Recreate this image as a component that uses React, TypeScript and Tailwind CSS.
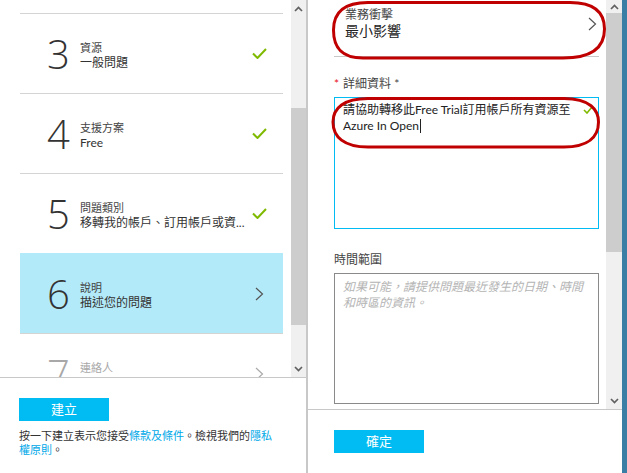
import React from 'react'

const sans = "font-['Lato','Noto_Sans_CJK_TC',sans-serif]"

type Step = {
  num: string
  title: string
  sub: string
  state: 'done' | 'active' | 'todo'
}

const steps: Step[] = [
  { num: '3', title: '資源', sub: '一般問題', state: 'done' },
  { num: '4', title: '支援方案', sub: 'Free', state: 'done' },
  { num: '5', title: '問題類別', sub: '移轉我的帳戶、訂用帳戶或資...', state: 'done' },
  { num: '6', title: '說明', sub: '描述您的問題', state: 'active' },
  { num: '7', title: '連絡人', sub: '', state: 'todo' },
]

function Check({ small }: { small?: boolean }) {
  if (small) {
    return (
      <svg width="10" height="8" viewBox="0 0 10 8">
        <path d="M1 4 L4 7 L9 1" fill="none" stroke="#7fba00" strokeWidth="1.6" />
      </svg>
    )
  }
  return (
    <svg width="15" height="11" viewBox="0 0 15 11">
      <path d="M1 5.5 L5.5 10 L14 1" fill="none" stroke="#7fba00" strokeWidth="2" />
    </svg>
  )
}

function Chevron({ color = '#555' }: { color?: string }) {
  return (
    <svg width="9" height="14" viewBox="0 0 9 14">
      <polyline points="1,1 7.5,7 1,13" fill="none" stroke={color} strokeWidth="1.2" />
    </svg>
  )
}

function ArrowUp() {
  return (
    <svg width="9" height="6" viewBox="0 0 9 6">
      <polyline points="1,5 4.5,1.5 8,5" fill="none" stroke="#606060" strokeWidth="1.7" />
    </svg>
  )
}

function ArrowDown() {
  return (
    <svg width="9" height="6" viewBox="0 0 9 6">
      <polyline points="1,1 4.5,4.5 8,1" fill="none" stroke="#606060" strokeWidth="1.7" />
    </svg>
  )
}

function StepRow({ step }: { step: Step }) {
  const active = step.state === 'active'
  const todo = step.state === 'todo'
  return (
    <div
      className={`flex h-[80px] items-center border-t pl-[27px] pr-[16px] ${
        active ? 'border-[#b3eaf9] bg-[#b3eaf9]' : 'border-[#d4d4d4]'
      }`}
    >
      <div
        className={`w-[33px] font-['Open_Sans',sans-serif] text-[40px] font-light leading-none ${
          todo ? 'text-[#a8a8a8]' : 'text-[#333]'
        }`}
      >
        {step.num}
      </div>
      <div className="flex-1 pt-[4px]">
        <div className={`text-[11px] leading-[15px] ${todo ? 'text-[#a8a8a8]' : 'text-[#444]'}`}>
          {step.title}
        </div>
        <div className={`text-[12px] leading-[16px] ${todo ? 'text-[#a8a8a8]' : 'text-[#333]'}`}>
          {step.sub || '\u00a0'}
        </div>
      </div>
      <div className="flex w-[15px] justify-center">
        {step.state === 'done' ? <Check /> : <Chevron color={todo ? '#aaa' : '#555'} />}
      </div>
    </div>
  )
}

export default function App() {
  return (
    <div className={`flex h-[473px] w-[627px] overflow-hidden bg-white ${sans}`}>
      {/* left: steps */}
      <div className="flex w-[308px] shrink-0 flex-col border-r-2 border-[#c8c8c8]">
        <div className="flex h-[378px] border-b border-[#c8c8c8]">
          <div className="flex-1 overflow-hidden pt-[13px]">
            <div className="ml-[20px] w-[263px]">
              {steps.map((s) => (
                <StepRow key={s.num} step={s} />
              ))}
            </div>
          </div>
          <div className="flex w-[15px] flex-col bg-[#f0f0f0]">
            <div className="flex h-[17px] items-center justify-center">
              <ArrowUp />
            </div>
            <div className="h-[91px]" />
            <div className="h-[217px] bg-[#cdcdcd]" />
            <div className="flex-1" />
            <div className="flex h-[17px] items-center justify-center">
              <ArrowDown />
            </div>
          </div>
        </div>
        <div className="pl-[19px] pt-[20px]">
          <button className="flex h-[23px] w-[90px] items-center justify-center bg-[#00bcf2] text-[13px] text-white">
            建立
          </button>
          <p className="mt-[8px] w-[262px] text-[11px] leading-[14px] text-[#333]">
            按一下建立表示您接受<span className="text-[#00a8e8]">條款及條件</span>。檢視我們的
            <span className="text-[#00a8e8]">隱私權原則</span>。
          </p>
        </div>
      </div>

      {/* right: form */}
      <div className="flex flex-1">
        <div className="flex flex-1 flex-col">
          <div className="relative flex h-[410px] border-b border-[#c8c8c8]">
            <div className="flex-1 overflow-hidden pl-[26px]">
              <div className="w-[265px]">
                <div className="flex h-[57px] items-start justify-between border-b border-[#c8c8c8] pl-[11px] pr-[2px] pt-[7px]">
                  <div>
                    <div className="text-[12px] leading-[16px] text-[#444]">業務衝擊</div>
                    <div className="-mt-[2px] text-[14px] leading-[20px] text-[#222]">最小影響</div>
                  </div>
                  <div className="mt-[10px]">
                    <Chevron />
                  </div>
                </div>

                <div className="mt-[19px] text-[12px] leading-[16px] text-[#444]">
                  <span className="text-[#e81123]">*</span>
                  <span className="ml-[4px]">詳細資料 *</span>
                </div>
                <div className="relative mt-[5px] h-[132px] border border-[#00bcf2] pl-[8px] pt-[4px] text-[12px] leading-[16px] text-[#222]">
                  <div>請協助轉移此Free Trial訂用帳戶所有資源至</div>
                  <div className="flex items-center">
                    Azure In Open<span className="ml-px inline-block h-[14px] w-px bg-[#222]" />
                  </div>
                  <div className="absolute right-[5px] top-[8px]">
                    <Check small />
                  </div>
                </div>

                <div className="mt-[23px] text-[12px] leading-[16px] text-[#444]">時間範圍</div>
                <div className="mt-[5px] h-[131px] border border-[#8a8a8a] pl-[8px] pr-[12px] pt-[5px] text-[12px] italic leading-[16px] text-[#b4b4b4]">
                  如果可能，請提供問題最近發生的日期、時間和時區的資訊。
                </div>
              </div>
            </div>
            <div className="flex w-[16px] flex-col bg-[#f0f0f0]">
              <div className="flex h-[13px] items-center justify-center">
                <ArrowUp />
              </div>
              <div className="h-[239px] bg-[#cdcdcd]" />
              <div className="flex-1" />
              <div className="flex h-[17px] items-center justify-center">
                <ArrowDown />
              </div>
            </div>

            {/* red annotation ovals */}
            <svg
              className="pointer-events-none absolute left-0 top-0"
              width="300"
              height="160"
              viewBox="0 0 300 160"
            >
              <path
                d="M60 2.5 H262 C288 2.5 296.5 14 296.5 29 C296.5 47 284 58 255 58 H55 C32 58 25.5 46 25.5 30 C25.5 13 35 2.5 60 2.5 Z"
                fill="none"
                stroke="#c00000"
                strokeWidth="3"
              />
              <path
                d="M60 98.5 H256 C282 98.5 290.5 110 290.5 122 C290.5 137 280 147 256 147 H60 C36 147 25 137 25 122 C25 108 36 98.5 60 98.5 Z"
                fill="none"
                stroke="#c00000"
                strokeWidth="3"
              />
            </svg>
          </div>
          <div className="pl-[26px] pt-[20px]">
            <button className="flex h-[23px] w-[90px] items-center justify-center bg-[#00bcf2] text-[13px] text-white">
              確定
            </button>
          </div>
        </div>
        <div className="w-[5px] bg-[#3a7ea6]" />
      </div>
    </div>
  )
}
